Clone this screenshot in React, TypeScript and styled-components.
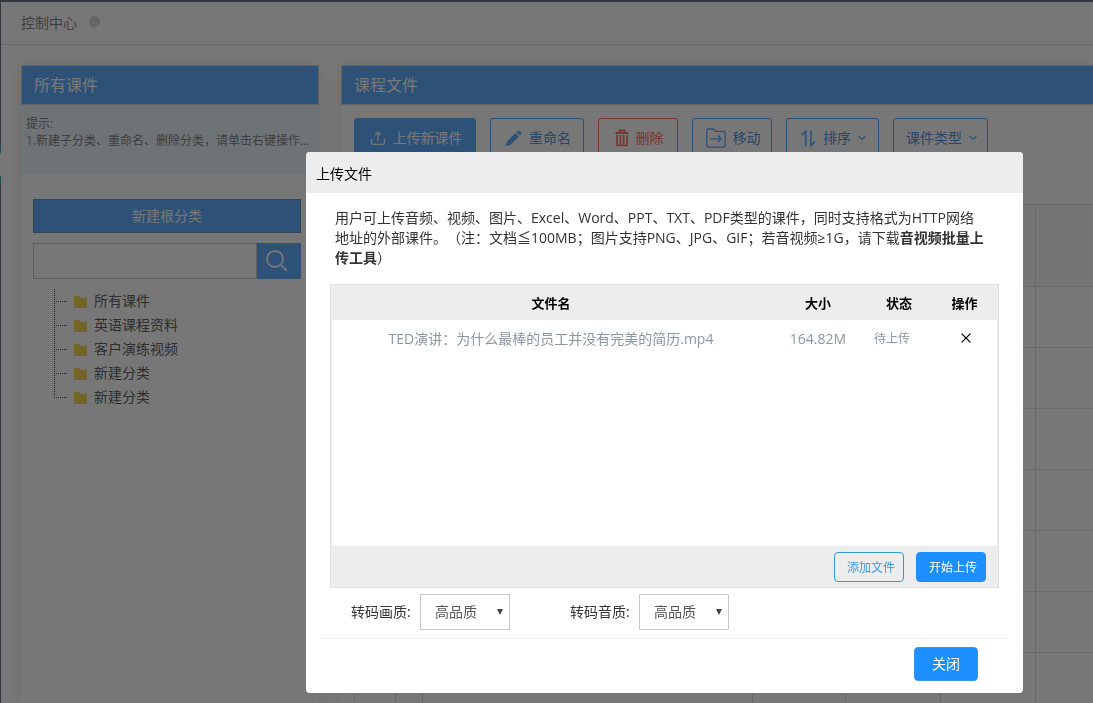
import React from "react";
import styled, { createGlobalStyle } from "styled-components";

const blue = "#60aeff";
const red = "#ff7468";

const GlobalStyle = createGlobalStyle`
  *, *::before, *::after { box-sizing: border-box; }
  html, body, #root { height: 100%; }
  body {
    margin: 0;
    overflow: hidden;
    background: #fff;
    font: 14px/20px "Open Sans", "Noto Sans CJK SC", sans-serif;
    text-spacing-trim: space-all;
    color: #333;
  }
  button, input, select { font: inherit; margin: 0; }
`;

const Page = styled.div`
  display: grid;
  grid-template-columns: 1px minmax(0, 1fr);
  grid-template-rows: 2px minmax(0, 1fr);
  height: 100%;
`;

const TopEdge = styled.div`
  grid-column: 1 / -1;
  background: #6e7684;
`;

const LeftEdge = styled.div`
  background: linear-gradient(
    #6e7684 143px, #4aa9b5 143px 151px, #fff 151px 174px, #4aa9b5 174px 183px, #6e7684 183px
  );
`;

const Content = styled.div`
  display: flex;
  flex-direction: column;
  min-width: 0;
  min-height: 0;
`;

const Crumbs = styled.header`
  display: flex;
  align-items: center;
  gap: 12px;
  height: 43px;
  flex: none;
  padding-left: 20px;
  border-bottom: 1px solid #e4e4e4;
  color: #888;
`;

const Dot = styled.span`
  width: 11px;
  height: 11px;
  margin-bottom: 4px;
  border-radius: 50%;
  background: #d8d8d8;
`;

const Columns = styled.div`
  display: flex;
  flex: 1;
  gap: 22px;
  min-height: 0;
  padding: 20px 0 0 20px;
`;

const Panel = styled.section<{ $width?: string }>`
  display: flex;
  flex-direction: column;
  flex: ${(p) => (p.$width ? "none" : "1")};
  width: ${(p) => p.$width ?? "auto"};
  min-width: 0;
  background: #fff;
  box-shadow: 0 0 16px rgba(0, 0, 0, 0.1);
`;

const PanelTitle = styled.h2<{ $open?: boolean }>`
  flex: none;
  height: 40px;
  margin: 0;
  padding: 0 12px;
  border: 1px solid #d6d6d6;
  border-right-width: ${(p) => (p.$open ? "0" : "1px")};
  background: ${blue};
  color: #fff;
  font-size: 16px;
  font-weight: 400;
  line-height: 38px;
`;

const Hint = styled.p`
  height: 69px;
  flex: none;
  margin: 0;
  padding: 10px 5px;
  background: #ecf6fc;
  color: #888;
  font-size: 12px;
  line-height: 17px;
  white-space: nowrap;
  overflow: hidden;
`;

const HintLine = styled.span`
  display: block;
`;

const SideBody = styled.div`
  padding: 25px 18px 0 12px;
`;

const NewRootButton = styled.button`
  width: 100%;
  height: 34px;
  border: 1px solid #6f94bb;
  background: ${blue};
  color: #fff;
`;

const SearchBar = styled.form`
  display: flex;
  height: 36px;
  margin: 10px 0;
`;

const SearchInput = styled.input`
  flex: 1;
  min-width: 0;
  border: 1px solid #ccc;
  background: #fff;
`;

const SearchButton = styled.button`
  width: 44px;
  padding: 0 12px 0 8px;
  border: 0;
  background: ${blue};
  line-height: 0;
`;

const Tree = styled.ul`
  margin: 0 0 0 21px;
  padding: 0;
  list-style: none;
`;

const TreeItem = styled.li`
  display: flex;
  align-items: center;
  height: 24px;
  color: #666;
  background:
    repeating-linear-gradient(#555 0 1px, transparent 1px 2px) 0 0 / 1px 100% no-repeat,
    repeating-linear-gradient(90deg, #555 0 1px, transparent 1px 2px) 0 12px / 13px 1px no-repeat;

  &:last-child {
    background-size: 1px 12px, 13px 1px;
  }
`;

const TreeLink = styled.a`
  display: flex;
  align-items: center;
  gap: 7px;
  padding-left: 20px;
  color: inherit;
  text-decoration: none;
`;

const Toolbar = styled.div`
  display: flex;
  flex: none;
  gap: 14px;
  padding: 13px 0 0 13px;
`;

const ToolButton = styled.button<{ $tone?: string; $solid?: boolean; $width: number }>`
  display: flex;
  align-items: center;
  justify-content: center;
  gap: 7px;
  flex: none;
  width: ${(p) => p.$width}px;
  height: 40px;
  padding: 0 0 0 2px;
  border: 1px solid ${(p) => p.$tone ?? blue};
  border-radius: 3px;
  background: ${(p) => (p.$solid ? blue : "#fff")};
  color: ${(p) => (p.$solid ? "#fff" : p.$tone ?? "#5b96e0")};
`;

const FileTable = styled.table`
  width: calc(100% - 13px);
  margin: 46px 0 0 13px;
  border-collapse: collapse;
  table-layout: fixed;

  th, td {
    height: 61px;
    padding: 0;
    border: 1px solid #dedede;
  }
  th {
    height: 82px;
    background: #fafafa;
  }
  th:last-child, td:last-child {
    border-right: 0;
  }
`;

const Overlay = styled.div`
  position: fixed;
  inset: 0;
  display: flex;
  align-items: flex-start;
  padding: 152px 70px 0 306px;
  background: rgba(0, 0, 0, 0.533);
`;

const Dialog = styled.div`
  flex: 1;
  min-width: 0;
  border-radius: 4px;
  background: #fff;
  overflow: hidden;
`;

const DialogTitle = styled.h1`
  margin: 0;
  padding: 0 10px;
  background: #ededed;
  color: #000;
  font-size: 14px;
  font-weight: 400;
  line-height: 43px;
  height: 41px;
`;

const Notice = styled.p`
  margin: 0;
  padding: 15px 36px 16px 29px;
  line-height: 20px;
`;

const Uploader = styled.div`
  margin: 0 24px;
  border: 1px solid #e1e1e1;
  background: #ededed;
`;

const QueueArea = styled.div`
  min-height: 261px;
  background: linear-gradient(#ededed 35px, #fff 35px);
  border: solid #ededed;
  border-width: 0 1px;
`;

const Queue = styled.table`
  width: 100%;
  border-collapse: collapse;
  table-layout: fixed;
  text-align: center;

  th, td { padding: 0; height: 36px; }
  th { color: #000; font-size: 13px; font-weight: 700; }
  td { color: #8b979f; }
`;

const StatusCell = styled.td`
  && { padding-right: 14px; }
  font-size: 12px;
`;

const RemoveButton = styled.button`
  display: block;
  width: 20px;
  height: 20px;
  margin: 0 auto;
  padding: 0 0 2px 2px;
  border: 0;
  background: none;
  line-height: 0;
`;

const UploadBar = styled.div`
  display: flex;
  justify-content: flex-end;
  gap: 12px;
  padding: 5px 12px;
  border-top: 1px solid #e4eaee;
`;

const SmallButton = styled.button<{ $primary?: boolean }>`
  width: 70px;
  height: 30px;
  padding: 2px 0 0 4px;
  border: 1px solid ${(p) => (p.$primary ? "#1e8fff" : "#3498db")};
  border-radius: 4px;
  background: ${(p) => (p.$primary ? "#1e8fff" : "transparent")};
  color: ${(p) => (p.$primary ? "#fff" : "#3d97dc")};
  font-size: 12px;
`;

const Options = styled.div`
  display: flex;
  gap: 60px;
  margin: 0 15px;
  padding: 6px 30px 8px;
  border-bottom: 1px solid #ededed;
`;

const Field = styled.label`
  display: flex;
  align-items: center;
  gap: 9px;
`;

const FieldName = styled.span`
  width: 60px;
  white-space: nowrap;
`;

const SelectBox = styled.span`
  position: relative;
  display: block;
`;

const Select = styled.select`
  display: block;
  width: 90px;
  height: 36px;
  padding: 0 14px;
  border: 1px solid #c8c8c8;
  border-radius: 0;
  background: #fff;
  color: #555;
  appearance: none;
`;

const SelectArrow = styled.svg`
  position: absolute;
  top: 15px;
  right: 7px;
  pointer-events: none;
`;

const DialogFooter = styled.footer`
  display: flex;
  justify-content: flex-end;
  padding: 8px 45px 12px;
`;

const CloseButton = styled.button`
  width: 64px;
  height: 34px;
  padding: 0;
  border: 1px solid #3498f0;
  border-radius: 4px;
  background: #1e8fff;
  color: #fff;
`;

const FolderIcon = () => (
  <svg width="13" height="14" viewBox="0 0 13 14" fill="#f8d757" aria-hidden="true">
    <path d="M0 3.200C0 2.500.4 2 1 2h3.600c.5 0 .8.2 1 .6L6 3.700h6c.6 0 1 .4 1 1V13c0 .6-.4 1-1 1H1c-.6 0-1-.4-1-1z" />
  </svg>
);

const UploadIcon = () => (
  <svg width="16" height="16" viewBox="0 0 16 16" fill="none" stroke="#fff" strokeWidth="1.400" strokeOpacity=".9" aria-hidden="true">
    <path d="M1.500 9v3.800c0 1 .6 1.600 1.600 1.600h9.800c1 0 1.600-.6 1.600-1.600V9M8 11V2.500M5 5l3-3 3 3" />
  </svg>
);

const PencilIcon = () => (
  <svg width="17" height="17" viewBox="0 0 18 18" fill={blue} aria-hidden="true">
    <path d="M.6 17.200l1.500-5L11 3.300l3.600 3.600-8.900 8.900zM12 2.300l1.500-1.500c.6-.5 1.200-.5 1.700 0l1.900 1.900c.5.5.5 1.100 0 1.700l-1.500 1.500z" />
  </svg>
);

const TrashIcon = () => (
  <svg width="14" height="18" viewBox="0 0 14 18" fill="none" stroke={red} aria-hidden="true">
    <path d="M.5 4h13M4.500 3.500v-2h5v2" strokeWidth="1.800" />
    <path d="M2 6v9.500c0 .7.4 1 1 1h8c.6 0 1-.3 1-1V6M5.400 6v10.500M8.600 6v10.500" strokeWidth="1.700" />
  </svg>
);

const MoveIcon = () => (
  <svg width="20" height="20" viewBox="0 0 20 20" fill="none" stroke={blue} strokeWidth="1.300" aria-hidden="true">
    <path d="M.8 3.300C.8 1.700 1.500 1 3 1h3.700c.8 0 1.200.3 1.700 1l.8 1.300h7.300c1.700 0 2.700.9 2.700 2.500v10.700c0 1.700-1 2.700-2.700 2.700h-13c-1.700 0-2.700-1-2.700-2.700zM4.500 10.800h10.500M11.800 7.500l3.300 3.300-3.300 3.300" />
  </svg>
);

const SortIcon = () => (
  <svg width="15" height="17" viewBox="0 0 15 17" fill="none" stroke={blue} strokeWidth="1.700" aria-hidden="true">
    <path d="M.6 5.200L4.700 1.500V16M10 .8v14.500l4.200-3.700" />
  </svg>
);

const ChevronIcon = () => (
  <svg width="8" height="6" viewBox="0 0 8 6" fill="none" stroke={blue} strokeWidth="1.200" aria-hidden="true">
    <path d="M.5 1L4 4.500 7.500 1" />
  </svg>
);

const SearchIcon = () => (
  <svg width="24" height="24" viewBox="0 0 24 24" fill="none" stroke="#fff" strokeWidth="1.800" aria-hidden="true">
    <circle cx="10" cy="10" r="8" />
    <path d="M15.800 15.800l6.200 6.200" />
  </svg>
);

const categories = ["所有课件", "英语课程资料", "客户演练视频", "新建分类", "新建分类"];
const fileRows = [0, 1, 2, 3, 4, 5, 6];
const fileColumns = [41, 27, 330, 93, 95, 95, undefined];

const QualityField = ({ label }: { label: string }) => (
  <Field>
    <FieldName>{label}</FieldName>
    <SelectBox>
      <Select defaultValue="high">
        <option value="high">高品质</option>
      </Select>
      <SelectArrow width="6" height="6" viewBox="0 0 6 6" aria-hidden="true">
        <path d="M0 0h6L3 6z" fill="#444" />
      </SelectArrow>
    </SelectBox>
  </Field>
);

export default function App() {
  return (
    <>
      <GlobalStyle />
      <Page>
        <TopEdge />
        <LeftEdge />
        <Content>
          <Crumbs>
            控制中心
            <Dot />
          </Crumbs>
          <Columns>
            <Panel $width="298px">
              <PanelTitle>所有课件</PanelTitle>
              <Hint>
                <HintLine>提示:</HintLine>
                <HintLine>1.新建子分类、重命名、删除分类，请单击右键操作...</HintLine>
              </Hint>
              <SideBody>
                <NewRootButton type="button">新建根分类</NewRootButton>
                <SearchBar>
                  <SearchInput type="text" aria-label="搜索" />
                  <SearchButton type="button" aria-label="搜索">
                    <SearchIcon />
                  </SearchButton>
                </SearchBar>
                <Tree>
                  {categories.map((name, i) => (
                    <TreeItem key={i}>
                      <TreeLink href="#">
                        <FolderIcon />
                        {name}
                      </TreeLink>
                    </TreeItem>
                  ))}
                </Tree>
              </SideBody>
            </Panel>
            <Panel>
              <PanelTitle $open>课程文件</PanelTitle>
              <Toolbar>
                <ToolButton type="button" $solid $width={122}><UploadIcon />上传新课件</ToolButton>
                <ToolButton type="button" $width={94}><PencilIcon />重命名</ToolButton>
                <ToolButton type="button" $tone={red} $width={80}><TrashIcon />删除</ToolButton>
                <ToolButton type="button" $width={80}><MoveIcon />移动</ToolButton>
                <ToolButton type="button" $width={93}><SortIcon />排序<ChevronIcon /></ToolButton>
                <ToolButton type="button" $width={95}>课件类型<ChevronIcon /></ToolButton>
              </Toolbar>
              <FileTable>
                <colgroup>
                  {fileColumns.map((w, i) => <col key={i} width={w} />)}
                </colgroup>
                <thead>
                  <tr>{fileColumns.map((_, i) => <th key={i} />)}</tr>
                </thead>
                <tbody>
                  {fileRows.map((r) => (
                    <tr key={r}>{fileColumns.map((_, i) => <td key={i} />)}</tr>
                  ))}
                </tbody>
              </FileTable>
            </Panel>
          </Columns>
        </Content>
      </Page>
      <Overlay>
        <Dialog role="dialog" aria-modal="true" aria-labelledby="upload-title">
          <DialogTitle id="upload-title">上传文件</DialogTitle>
          <Notice>
            用户可上传音频、视频、图片、Excel、Word、PPT、TXT、PDF类型的课件，同时支持格式为HTTP网络地址的外部课件。（注：文档≦100MB；图片支持PNG、JPG、GIF；若音视频≥1G，请下载<b>音视频批量上传工具</b>）
          </Notice>
          <Uploader>
            <QueueArea>
              <Queue>
                <colgroup>
                  <col />
                  <col width="96" />
                  <col width="66" />
                  <col width="65" />
                </colgroup>
                <thead>
                  <tr>
                    <th>文件名</th>
                    <th>大小</th>
                    <th>状态</th>
                    <th>操作</th>
                  </tr>
                </thead>
                <tbody>
                  <tr>
                    <td>TED演讲：为什么最棒的员工并没有完美的简历.mp4</td>
                    <td>164.82M</td>
                    <StatusCell>待上传</StatusCell>
                    <td>
                      <RemoveButton type="button" aria-label="移除">
                        <svg width="10" height="10" viewBox="0 0 10 10" stroke="#000" strokeWidth="1.300" aria-hidden="true">
                          <path d="M.6.6l8.800 8.800M9.400.6L.6 9.400" />
                        </svg>
                      </RemoveButton>
                    </td>
                  </tr>
                </tbody>
              </Queue>
            </QueueArea>
            <UploadBar>
              <SmallButton type="button">添加文件</SmallButton>
              <SmallButton type="button" $primary>开始上传</SmallButton>
            </UploadBar>
          </Uploader>
          <Options>
            <QualityField label="转码画质:" />
            <QualityField label="转码音质:" />
          </Options>
          <DialogFooter>
            <CloseButton type="button">关闭</CloseButton>
          </DialogFooter>
        </Dialog>
      </Overlay>
    </>
  );
}
